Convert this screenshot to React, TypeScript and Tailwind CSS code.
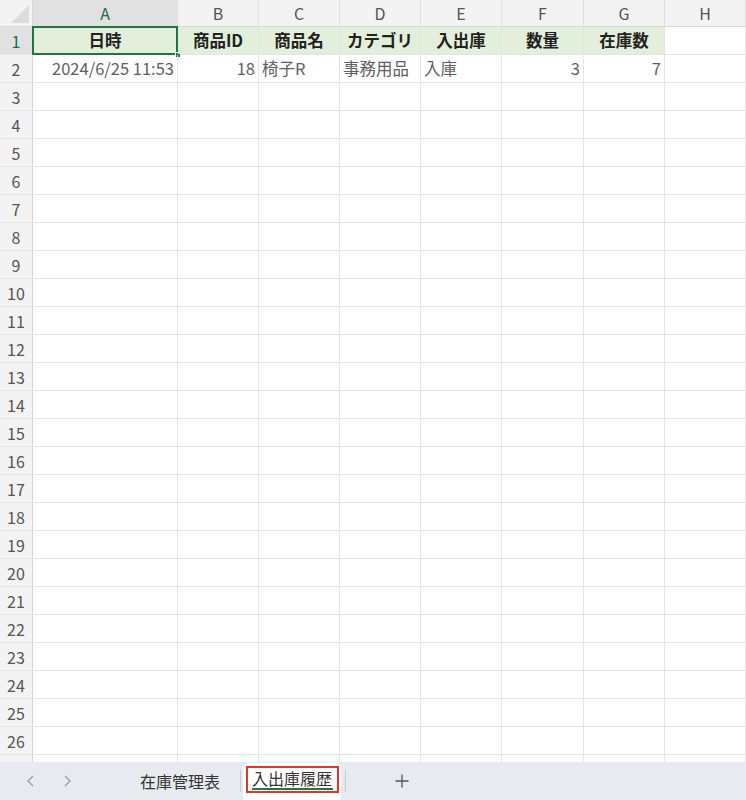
import React from "react";

const cols = ["A", "B", "C", "D", "E", "F", "G", "H"];
const widths = [145, 81, 81, 81, 81, 82, 81, 81];

type Cell = { t: string; align: "left" | "right" | "center"; bold?: boolean };

const row1: Cell[] = [
  { t: "日時", align: "center", bold: true },
  { t: "商品ID", align: "center", bold: true },
  { t: "商品名", align: "center", bold: true },
  { t: "カテゴリ", align: "center", bold: true },
  { t: "入出庫", align: "center", bold: true },
  { t: "数量", align: "center", bold: true },
  { t: "在庫数", align: "center", bold: true },
];
const row2: Cell[] = [
  { t: "2024/6/25 11:53", align: "right" },
  { t: "18", align: "right" },
  { t: "椅子R", align: "left" },
  { t: "事務用品", align: "left" },
  { t: "入庫", align: "left" },
  { t: "3", align: "right" },
  { t: "7", align: "right" },
];

const font = { fontFamily: '"Noto Sans CJK JP", "Noto Sans", sans-serif' };

export default function App() {
  const rows = Array.from({ length: 27 }, (_, i) => i + 1);
  return (
    <div
      className="w-[746px] h-[800px] overflow-hidden bg-white flex flex-col"
      style={font}
    >
      <div className="h-[762px] overflow-hidden shrink-0">
        {/* column header */}
        <div className="flex h-[27px] bg-[#f3f3f3] border-b border-[#d8d8d8]">
          <div className="w-[33px] shrink-0 border-r border-[#d8d8d8] relative overflow-hidden">
            <div className="absolute right-[3px] bottom-[3px] w-0 h-0 border-l-[18px] border-l-transparent border-b-[18px] border-b-[#dcdcdc]" />
          </div>
          {cols.map((c, i) => (
            <div
              key={c}
              style={{ width: widths[i] }}
              className={
                "shrink-0 flex items-center justify-center text-[16px] border-r border-[#e0e0e0] " +
                (i === 0 ? "bg-[#e1e1e1] text-[#1e6c42]" : "text-[#555]")
              }
            >
              {c}
            </div>
          ))}
        </div>
        {rows.map((r) => (
          <div key={r} className="flex h-[28px] border-b border-[#e4e4e4]">
            <div
              className={
                "w-[33px] shrink-0 flex items-center justify-center text-[16px] border-r border-[#d8d8d8] " +
                (r === 1 ? "bg-[#e1e1e1] text-[#1e6c42]" : "bg-[#f3f3f3] text-[#555]")
              }
            >
              {r <= 26 ? r : ""}
            </div>
            {cols.map((c, i) => {
              let cell: Cell | undefined;
              if (r === 1) cell = row1[i];
              if (r === 2) cell = row2[i];
              const green = r === 1 && i < 7;
              return (
                <div
                  key={c}
                  style={{ width: widths[i] }}
                  className={
                    "shrink-0 relative flex items-center px-[3px] text-[16.5px] border-r border-[#e4e4e4] whitespace-nowrap " +
                    (green ? "bg-[#e2efda] " : "") +
                    (cell?.align === "right"
                      ? "justify-end "
                      : cell?.align === "center"
                      ? "justify-center "
                      : "justify-start ") +
                    (cell?.bold ? "font-bold text-[#222]" : "text-[#606060]")
                  }
                >
                  {cell?.t}
                  {r === 1 && i === 0 && (
                    <>
                      <div className="absolute left-[-1px] top-[-1px] right-[-1px] bottom-[-1px] border-2 border-[#217346] pointer-events-none" />
                      <div className="absolute right-[-4px] bottom-[-4px] w-[6px] h-[6px] bg-[#217346] border border-white" />
                    </>
                  )}
                </div>
              );
            })}
          </div>
        ))}
      </div>
      {/* tab bar */}
      <div className="flex-1 bg-[#e7eaef] flex items-stretch relative">
        <div className="w-[130px] flex items-center pl-[24px] gap-[22px] text-[#9a9a9a]">
          <svg width="14" height="14" viewBox="0 0 14 14" fill="none" stroke="currentColor" strokeWidth="1.3">
            <path d="M9 2 L4 7 L9 12" />
          </svg>
          <svg width="14" height="14" viewBox="0 0 14 14" fill="none" stroke="currentColor" strokeWidth="1.3">
            <path d="M5 2 L10 7 L5 12" />
          </svg>
        </div>
        <div className="w-[110px] flex items-center pl-[10px] text-[16px] text-[#333]">
          在庫管理表
        </div>
        <div className="w-px h-[22px] bg-[#c8ccd2] self-center" />
        <div className="mt-[1px] ml-[2px] w-[98px] bg-white rounded-t-[6px] relative flex items-start justify-center pt-[3px]">
          <div className="w-[93px] h-[27px] border-2 border-[#e8332a] flex items-start justify-center relative">
            <span className="text-[16px] text-[#333] leading-none mt-[2px]">入出庫履歴</span>
            <div className="absolute left-[4px] right-[4px] bottom-[1px] h-[2px] bg-[#1e7a3c]" />
          </div>
        </div>
        <div className="w-px h-[22px] bg-[#c8ccd2] self-center ml-[4px]" />
        <div className="w-[112px] flex items-center justify-center text-[#555]">
          <svg width="14" height="14" viewBox="0 0 14 14" fill="none" stroke="currentColor" strokeWidth="1.3">
            <path d="M7 0.5 V13.5 M0.5 7 H13.5" />
          </svg>
        </div>
      </div>
    </div>
  );
}
